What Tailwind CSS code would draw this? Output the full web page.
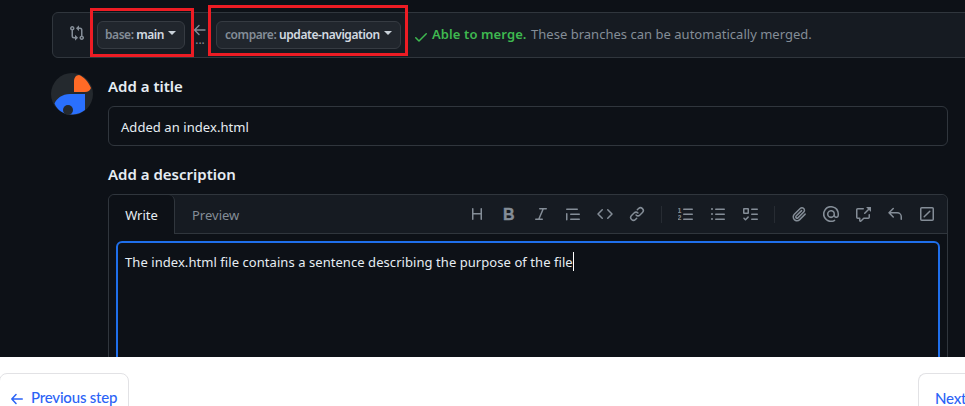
<!DOCTYPE html>
<html lang="en">
<head>
<meta charset="utf-8">
<title>Open a pull request</title>
<script src="https://cdn.jsdelivr.net/npm/@tailwindcss/browser@4"></script>
</head>
<body class="w-[965px] h-[406px] overflow-hidden bg-white font-['Noto_Sans','Open_Sans',sans-serif] text-[13px] whitespace-nowrap">
<main class="h-[357px] overflow-hidden bg-[#0d1117] pl-[52px] pt-3 text-[#e6edf3]">
  <!-- Branch range bar -->
  <div class="flex h-[46px] w-[930px] items-center rounded-md border border-[#30363d] bg-[#161b22] pl-4 text-[#848d97]">
    <svg class="size-4 shrink-0 -mt-1" viewBox="0 0 16 16" fill="currentColor"><path d="M9.573.677A.25.25 0 0 1 10 .854V2.5h1A2.5 2.5 0 0 1 13.5 5v5.628a2.251 2.251 0 1 1-1.5 0V5a1 1 0 0 0-1-1h-1v1.646a.25.25 0 0 1-.427.177L7.177 3.427a.25.25 0 0 1 0-.354ZM6 12v-1.646a.25.25 0 0 1 .427-.177l2.396 2.396a.25.25 0 0 1 0 .354l-2.396 2.396A.25.25 0 0 1 6 15.146V13.5H5A2.5 2.5 0 0 1 2.5 11V5.372a2.25 2.25 0 1 1 1.5 0V11a1 1 0 0 0 1 1h1Zm6.75 0a.75.75 0 1 0 0 1.5.75.75 0 0 0 0-1.5ZM4 3.25a.75.75 0 1 0-1.5 0 .75.75 0 0 0 1.5 0Z"/></svg>
    <div class="relative ml-3 flex h-7 w-[88px] shrink-0 items-center rounded-md border border-[#363b42] bg-[#21262d] pl-[7px] text-xs font-semibold">
      <span class="w-[63px] tracking-[-0.45px]">base: <b class="font-semibold text-[#d3dae1]">main</b></span>
      <span class="mb-1 border-x-4 border-t-4 border-x-transparent border-t-[#c9d1d9]"></span>
      <span class="absolute -left-2 -top-[14px] h-[49px] w-[104px] border-3 border-[#ed1c24]"></span>
    </div>
    <div class="ml-[7px] flex w-4 shrink-0 flex-col items-center">
      <svg class="size-4" viewBox="0 0 16 16" fill="none" stroke="currentColor" stroke-width="1.4" stroke-linecap="round" stroke-linejoin="round"><path d="M7 3.500 2.500 8 7 12.500M2.500 8h10.500"/></svg>
      <span class="-mt-[6px] h-4 text-xs leading-4">...</span>
    </div>
    <div class="relative ml-2 flex h-7 w-[185px] shrink-0 items-center rounded-md border border-[#363b42] bg-[#21262d] pl-2 text-xs font-semibold">
      <span class="w-[159px] tracking-[-0.43px]">compare: <b class="font-semibold text-[#d3dae1]">update-navigation</b></span>
      <span class="mb-1 border-x-4 border-t-4 border-x-transparent border-t-[#c9d1d9]"></span>
      <span class="absolute -left-[9px] -top-[17px] h-[51px] w-[200px] border-3 border-[#ed1c24]"></span>
    </div>
    <svg class="ml-3 mt-[3px] size-4 shrink-0 text-[#3fb950]" viewBox="0 0 16 16" fill="currentColor"><path d="M13.780 4.220a.75.75 0 0 1 0 1.060l-7.250 7.250a.75.75 0 0 1-1.060 0L2.220 9.280a.751.751 0 0 1 .018-1.042.751.751 0 0 1 1.042-.018L6 10.940l6.720-6.720a.75.75 0 0 1 1.060 0Z"/></svg>
    <b class="ml-[3px] w-[99px] shrink-0 font-semibold tracking-[0.1px] text-[#3fb950]">Able to merge.</b>
    <span class="tracking-[0.02px]">These branches can be automatically merged.</span>
  </div>
  <!-- Title and description form -->
  <div class="-ml-px mt-[15px] flex">
    <svg class="size-[42px] shrink-0" viewBox="0 0 42 42"><circle cx="21" cy="21" r="21" fill="#24292e"/><path d="M23 19V8.500C23 4.500 25 2.200 28 2c5 2 9 6.500 12 13-1 2.500-3 4-6 4Z" fill="#ff6a26"/><path d="M34 21v16c-3.500 2.800-7.500 4.300-12 4.500-9 .5-15.500-4-18.500-11C6 25 11 21.300 19 21Z" fill="#2a70fe"/><circle cx="17" cy="37" r="5" fill="#24292e"/></svg>
    <div class="ml-[15px] w-[840px]">
      <h2 class="mt-[3px] h-[30px] text-[15px] font-semibold leading-5">Add a title</h2>
      <div class="flex h-10 items-center rounded-md border border-[#30363d] pl-3 pt-[3px]"><span class="tracking-[0.06px]">Added an index.html</span></div>
      <h2 class="mt-[18px] h-[30px] text-[15px] font-semibold leading-5">Add a description</h2>
      <div class="h-[240px] rounded-md border border-[#30363d]">
        <div class="flex h-[39px] rounded-t-md bg-[#161b22]">
          <div class="flex w-[66px] items-center justify-center rounded-t-md border-r border-[#30363d] bg-[#0d1117] pt-[2px]">Write</div>
          <div class="flex flex-1 items-center border-b border-[#30363d] text-[#848d97]">
            <span class="w-[286px] pl-[17px] pt-[3px]">Preview</span>
            <div class="flex items-center [&>svg]:mx-2 [&>svg]:size-4 [&>svg]:shrink-0">
              <svg viewBox="0 0 16 16" fill="none" stroke="currentColor" stroke-width="1.5" stroke-linecap="round"><path d="M3.750 2.750v10.500M12.250 2.750v10.500M3.750 7.750h8.500"/></svg>
              <svg viewBox="0 0 16 16" fill="currentColor"><text x="2" y="14" stroke="currentColor" stroke-width=".4" font-size="16" font-weight="700" font-family="Liberation Sans">B</text></svg>
              <svg viewBox="0 0 16 16" fill="none" stroke="currentColor" stroke-width="1.5" stroke-linecap="round"><path d="M6.750 2.750h6.500M2.750 13.250h6.500M10.250 2.750l-4.500 10.500"/></svg>
              <svg viewBox="0 0 16 16" fill="currentColor"><path d="M1.750 2.500h10.500a.75.75 0 0 1 0 1.500H1.750a.75.75 0 0 1 0-1.500Zm4 5h8.500a.75.75 0 0 1 0 1.500h-8.500a.75.75 0 0 1 0-1.500Zm0 5h8.500a.75.75 0 0 1 0 1.500h-8.500a.75.75 0 0 1 0-1.500ZM2.500 7.750v6a.75.75 0 0 1-1.500 0v-6a.75.75 0 0 1 1.500 0Z"/></svg>
              <svg viewBox="0 0 16 16" fill="none" stroke="currentColor" stroke-width="1.5" stroke-linecap="round" stroke-linejoin="round"><path d="M5.250 3.750 1 8l4.250 4.250M10.750 3.750 15 8l-4.250 4.250"/></svg>
              <svg viewBox="0 0 16 16" fill="currentColor"><path d="m7.775 3.275 1.250-1.250a3.500 3.500 0 1 1 4.950 4.950l-2.500 2.500a3.500 3.500 0 0 1-4.950 0 .751.751 0 0 1 .018-1.042.751.751 0 0 1 1.042-.018 1.998 1.998 0 0 0 2.830 0l2.500-2.500a2.002 2.002 0 0 0-2.830-2.830l-1.250 1.250a.751.751 0 0 1-1.042-.018.751.751 0 0 1-.018-1.042Zm-4.690 9.640a1.998 1.998 0 0 0 2.830 0l1.250-1.250a.751.751 0 0 1 1.042.018.751.751 0 0 1 .018 1.042l-1.250 1.250a3.500 3.500 0 1 1-4.950-4.950l2.500-2.500a3.500 3.500 0 0 1 4.950 0 .751.751 0 0 1-.018 1.042.751.751 0 0 1-1.042.018 1.998 1.998 0 0 0-2.830 0l-2.500 2.500a1.998 1.998 0 0 0 0 2.830Z"/></svg>
              <span class="mx-2 h-[17px] w-px bg-[#272c33]"></span>
              <svg viewBox="0 0 16 16" fill="currentColor"><path d="M5.750 2.500h8.500a.75.75 0 0 1 0 1.500h-8.500a.75.75 0 0 1 0-1.500Zm0 5h8.500a.75.75 0 0 1 0 1.500h-8.500a.75.75 0 0 1 0-1.500Zm0 5h8.500a.75.75 0 0 1 0 1.500h-8.500a.75.75 0 0 1 0-1.500Z"/><text x="-.5" y="7" font-size="7" font-weight="700" font-family="Liberation Sans">1</text><text x="-.5" y="14" font-size="7" font-weight="700" font-family="Liberation Sans">2</text></svg>
              <svg viewBox="0 0 16 16" fill="currentColor"><path d="M5.750 2.500h8.500a.75.75 0 0 1 0 1.500h-8.500a.75.75 0 0 1 0-1.500Zm0 5h8.500a.75.75 0 0 1 0 1.500h-8.500a.75.75 0 0 1 0-1.500Zm0 5h8.500a.75.75 0 0 1 0 1.500h-8.500a.75.75 0 0 1 0-1.500ZM2 14a1 1 0 1 1 0-2 1 1 0 0 1 0 2Zm1-6a1 1 0 1 1-2 0 1 1 0 0 1 2 0ZM2 4a1 1 0 1 1 0-2 1 1 0 0 1 0 2Z"/></svg>
              <svg viewBox="0 0 16 16" fill="currentColor" fill-rule="evenodd"><path d="M2 2h4a1 1 0 0 1 1 1v4a1 1 0 0 1-1 1H2a1 1 0 0 1-1-1V3a1 1 0 0 1 1-1Zm4.655 8.595a.75.75 0 0 1 0 1.060L4.030 14.280a.75.75 0 0 1-1.060 0l-1.500-1.500a.749.749 0 0 1 .326-1.275.749.749 0 0 1 .734.215l.97.97 2.095-2.095a.75.75 0 0 1 1.060 0ZM9.750 2.500h5.500a.75.75 0 0 1 0 1.500h-5.500a.75.75 0 0 1 0-1.500Zm0 5h5.500a.75.75 0 0 1 0 1.500h-5.500a.75.75 0 0 1 0-1.500Zm0 5h5.500a.75.75 0 0 1 0 1.500h-5.500a.75.75 0 0 1 0-1.500Zm-7.250-9v3h3v-3Z"/></svg>
              <span class="mx-2 h-[17px] w-px bg-[#272c33]"></span>
              <svg viewBox="0 0 16 16" fill="currentColor"><path d="M12.212 3.020a1.753 1.753 0 0 0-2.478.003l-5.830 5.830a3.007 3.007 0 0 0-.88 2.127c0 .795.315 1.551.88 2.116.567.567 1.333.89 2.126.89.79 0 1.548-.321 2.116-.89l5.480-5.480a.75.75 0 0 1 1.061 1.060l-5.480 5.480a4.492 4.492 0 0 1-3.177 1.330c-1.200 0-2.345-.487-3.187-1.330a4.483 4.483 0 0 1-1.320-3.177c0-1.195.475-2.341 1.320-3.186l5.830-5.830a3.250 3.250 0 0 1 5.553 2.297c0 .863-.343 1.691-.953 2.301L7.439 12.390c-.375.377-.884.59-1.416.593a1.998 1.998 0 0 1-1.412-.593 1.992 1.992 0 0 1 0-2.828l5.480-5.480a.751.751 0 0 1 1.042.018.751.751 0 0 1 .018 1.042l-5.480 5.480a.492.492 0 0 0 0 .707.499.499 0 0 0 .352.154.51.51 0 0 0 .356-.154l5.833-5.827a1.755 1.755 0 0 0 0-2.481Z"/></svg>
              <svg viewBox="0 0 16 16" fill="currentColor"><path d="M4.750 2.370a6.501 6.501 0 0 0 6.500 11.260.75.75 0 0 1 .75 1.298A7.999 7.999 0 0 1 .989 4.148 8 8 0 0 1 16 7.750v1.500a2.750 2.750 0 0 1-5.072 1.475 3.999 3.999 0 0 1-6.650-4.190A4 4 0 0 1 12 8v1.250a1.250 1.250 0 0 0 2.500 0V7.867a6.500 6.500 0 0 0-9.750-5.496ZM10.500 8a2.500 2.500 0 1 0-5 0 2.500 2.500 0 0 0 5 0Z"/></svg>
              <svg viewBox="0 0 16 16" fill="currentColor"><path d="M2.750 3.500a.25.25 0 0 0-.25.25v7.500c0 .138.112.25.25.25h2a.75.75 0 0 1 .75.75v2.190l2.720-2.720a.749.749 0 0 1 .53-.22h4.500a.25.25 0 0 0 .25-.25v-2.500a.75.75 0 0 1 1.500 0v2.500A1.750 1.750 0 0 1 13.250 13H9.060l-2.573 2.573A1.458 1.458 0 0 1 4 14.543V13H2.750A1.750 1.750 0 0 1 1 11.250v-7.500C1 2.784 1.784 2 2.750 2h5.500a.75.75 0 0 1 0 1.500ZM16 1.250v4.146a.25.25 0 0 1-.427.177L14.030 4.030l-3.750 3.750a.749.749 0 0 1-1.275-.326.749.749 0 0 1 .215-.734l3.750-3.750-1.543-1.543A.25.25 0 0 1 11.604 1h4.146a.25.25 0 0 1 .25.25Z"/></svg>
              <svg viewBox="0 0 16 16" fill="currentColor"><path d="M6.780 1.970a.75.75 0 0 1 0 1.060L3.810 6h6.440A4.750 4.750 0 0 1 15 10.750v2.500a.75.75 0 0 1-1.500 0v-2.500a3.250 3.250 0 0 0-3.250-3.250H3.810l2.970 2.970a.749.749 0 0 1-.326 1.275.749.749 0 0 1-.734-.215L1.470 7.280a.75.75 0 0 1 0-1.060l4.250-4.250a.75.75 0 0 1 1.060 0Z"/></svg>
              <svg viewBox="0 0 16 16" fill="none" stroke="currentColor" stroke-width="1.5" stroke-linecap="round"><rect x="1.750" y="1.750" width="12.500" height="12.500" rx="1"/><path d="m5.200 10.800 5.600-5.600"/></svg>
            </div>
          </div>
        </div>
        <div class="mx-[7px] mt-[7px] flex h-[200px] items-start rounded-md border-2 border-[#1f6feb] pl-[7px] pt-[9px] leading-5">
          <span class="tracking-[0.06px]">The index.html file contains a sentence describing the purpose of the file</span><span class="h-[19px] w-px bg-white"></span>
        </div>
      </div>
    </div>
  </div>
</main>
<!-- Step navigation -->
<nav class="flex h-[49px] items-start justify-between overflow-hidden pt-4 font-[Lato,sans-serif] text-[15px] font-medium leading-5 text-[#2b63f6]">
  <a class="-ml-px flex h-[50px] w-[130px] shrink-0 items-center rounded-lg border border-[#e2e2e5] pl-[10px] pb-[2px]">
    <svg class="mr-2 mt-[3px] h-3 w-[13px]" viewBox="0 0 13 12" fill="none" stroke="currentColor" stroke-width="1.5" stroke-linecap="round" stroke-linejoin="round"><path d="M6 1.500 1.800 6 6 10.500M1.800 6h10.500"/></svg>
    <span class="tracking-[-0.2px]">Previous step</span>
  </a>
  <a class="flex h-[50px] w-[47px] shrink-0 items-center rounded-tl-lg border-l border-t border-[#e2e2e5] pl-4 pb-px"><span class="tracking-[-0.2px]">Next</span></a>
</nav>
</body>
</html>
